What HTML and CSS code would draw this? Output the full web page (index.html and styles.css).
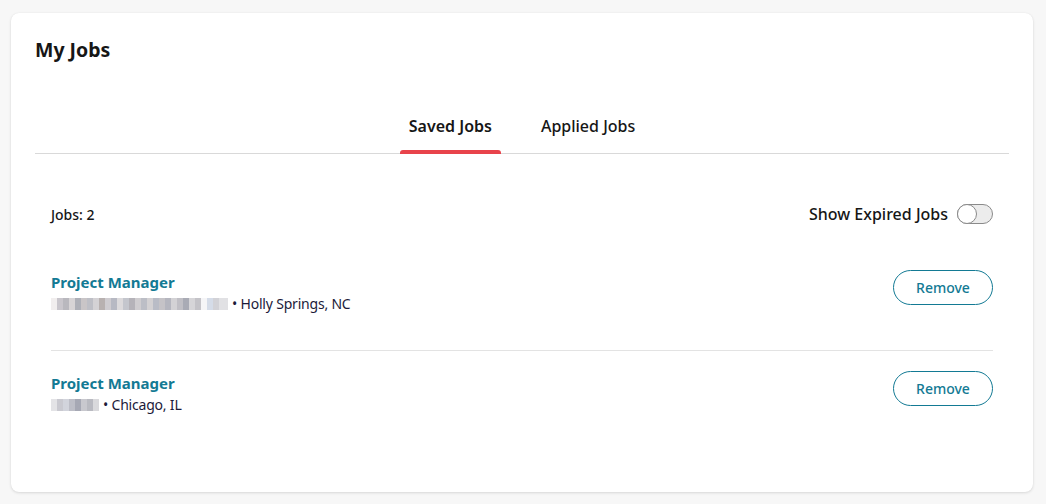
FILE: index.html
```html
<!DOCTYPE html>
<html lang="en">
<head>
<meta charset="utf-8">
<title>My Jobs</title>
<link rel="stylesheet" href="styles.css">
</head>
<body>
<main class="card">
  <h1 class="card-title">My Jobs</h1>
  <nav class="tabs">
    <a class="tab tab-active" href="#">Saved Jobs</a>
    <a class="tab" href="#">Applied Jobs</a>
  </nav>
  <section class="jobs">
    <div class="jobs-bar">
      <span class="jobs-count">Jobs: 2</span>
      <label class="expired">
        <span>Show Expired Jobs</span>
        <span class="toggle"><span class="knob"></span></span>
      </label>
    </div>
    <ul class="job-list">
      <li class="job">
        <div class="job-info">
          <a class="job-title" href="#">Project Manager</a>
          <div class="job-meta"><span class="redacted redacted-long" aria-label="Company name hidden"></span> • Holly Springs, NC</div>
        </div>
        <button class="remove-btn" type="button">Remove</button>
      </li>
      <li class="job">
        <div class="job-info">
          <a class="job-title" href="#">Project Manager</a>
          <div class="job-meta"><span class="redacted redacted-short" aria-label="Company name hidden"></span> • Chicago, IL</div>
        </div>
        <button class="remove-btn" type="button">Remove</button>
      </li>
    </ul>
  </section>
</main>
</body>
</html>
```

FILE: styles.css
```css
* { box-sizing: border-box; }

html, body {
  margin: 0;
  background: #f7f7f7;
}

body {
  padding: 13px 13px 12px 11px;
  font-family: "Noto Sans", "Open Sans", sans-serif;
  color: #161616;
}

.card {
  background: #fff;
  border-radius: 8px;
  box-shadow: 0 1px 3px rgba(0,0,0,0.12), 0 0 1px rgba(0,0,0,0.08);
  height: 479px;
  padding: 25px 24px 0 24px;
}

.card-title {
  margin: 0;
  font-size: 19.5px;
  line-height: 24px;
  font-weight: 700;
  color: #161616;
}

.tabs {
  margin-top: 54px;
  display: flex;
  justify-content: center;
  gap: 31px;
  border-bottom: 1px solid #d9d9d9;
}

.tab {
  position: relative;
  display: block;
  padding: 0 9px 18px;
  font-size: 16px;
  line-height: 20px;
  font-weight: 500;
  color: #161616;
  text-decoration: none;
  margin-bottom: -1px;
}

.tab-active {
  font-weight: 600;
}

.tab-active::after {
  content: "";
  position: absolute;
  left: 0;
  right: 0;
  bottom: 0;
  height: 4px;
  background: #e8434b;
  border-radius: 3px 3px 0 0;
}

.jobs {
  padding: 0 16px;
}

.jobs-bar {
  display: flex;
  justify-content: space-between;
  align-items: center;
  margin-top: 49px;
  height: 22px;
}

.jobs-count {
  font-size: 14px;
  font-weight: 500;
}

.expired {
  display: flex;
  align-items: center;
  gap: 9px;
  font-size: 16px;
  font-weight: 500;
}

.toggle {
  position: relative;
  width: 36px;
  height: 20px;
  border: 1px solid #8a8a8a;
  border-radius: 10px;
  background: #ececec;
}

.knob {
  position: absolute;
  left: -1px;
  top: -1px;
  width: 20px;
  height: 20px;
  border-radius: 50%;
  background: #fff;
  border: 1px solid #8a8a8a;
}

.job-list {
  list-style: none;
  margin: 26px 0 0;
  padding: 0;
}

.job {
  display: flex;
  justify-content: space-between;
  align-items: flex-start;
  padding: 20px 0;
}

.job + .job {
  border-top: 1px solid #e3e3e3;
  margin-top: 15px;
  padding-top: 21px;
}

.job-info {
  display: flex;
  flex-direction: column;
}

.job-title {
  font-size: 15px;
  line-height: 22px;
  font-weight: 700;
  color: #137a94;
  text-decoration: none;
}

.job-meta {
  font-size: 14px;
  line-height: 22px;
  letter-spacing: -0.2px;
  color: #1c1b3a;
  display: flex;
  align-items: center;
  gap: 4px;
}

.redacted {
  display: inline-block;
  height: 12px;
  background:
    linear-gradient(90deg, #f1eeee 0 6px, #c9c6cc 6px 12px, #b9b8be 12px 18px, #d7d4d6 18px 24px, #aeb0b8 24px 30px, #c9c5c7 30px 36px, #bebfc6 36px 42px, #d4d2d5 42px 48px, #b8b1b0 48px 54px, #cfccd0 54px 60px, #b7b9c3 60px 66px, #dcdadc 66px 72px, #c4c6cd 72px 78px, #b5b3b9 78px 84px, #cfcdd0 84px 90px, #bcbec6 90px 96px, #d3d1d3 96px 102px, #b9bcc6 102px 108px, #c5c3c7 108px 114px, #b5b6bf 114px 120px, #d3d2d5 120px 126px, #c0bfc5 126px 132px, #a9abb5 132px 138px, #d6d5d8 138px 144px, #c4c3c8 144px 150px, #f5f5f7 150px 156px, #d5dce8 156px 162px, #d2d2d7 162px 168px, #e1e1e4 168px 177px);
}

.redacted-long { width: 177px; }

.redacted-short {
  width: 48px;
  background:
    linear-gradient(90deg, #e3e3e6 0 6px, #c9c9d0 6px 12px, #d2d4dc 12px 18px, #bdbec7 18px 24px, #a6a8b4 24px 30px, #c8c8ce 30px 36px, #b9bac1 36px 42px, #d9d9dc 42px 48px);
}

.remove-btn {
  width: 100px;
  height: 35px;
  margin-top: -1px;
  border: 1px solid #137a94;
  border-radius: 18px;
  background: #fff;
  color: #137a94;
  font-family: inherit;
  font-size: 14px;
  font-weight: 500;
  cursor: pointer;
}
```
